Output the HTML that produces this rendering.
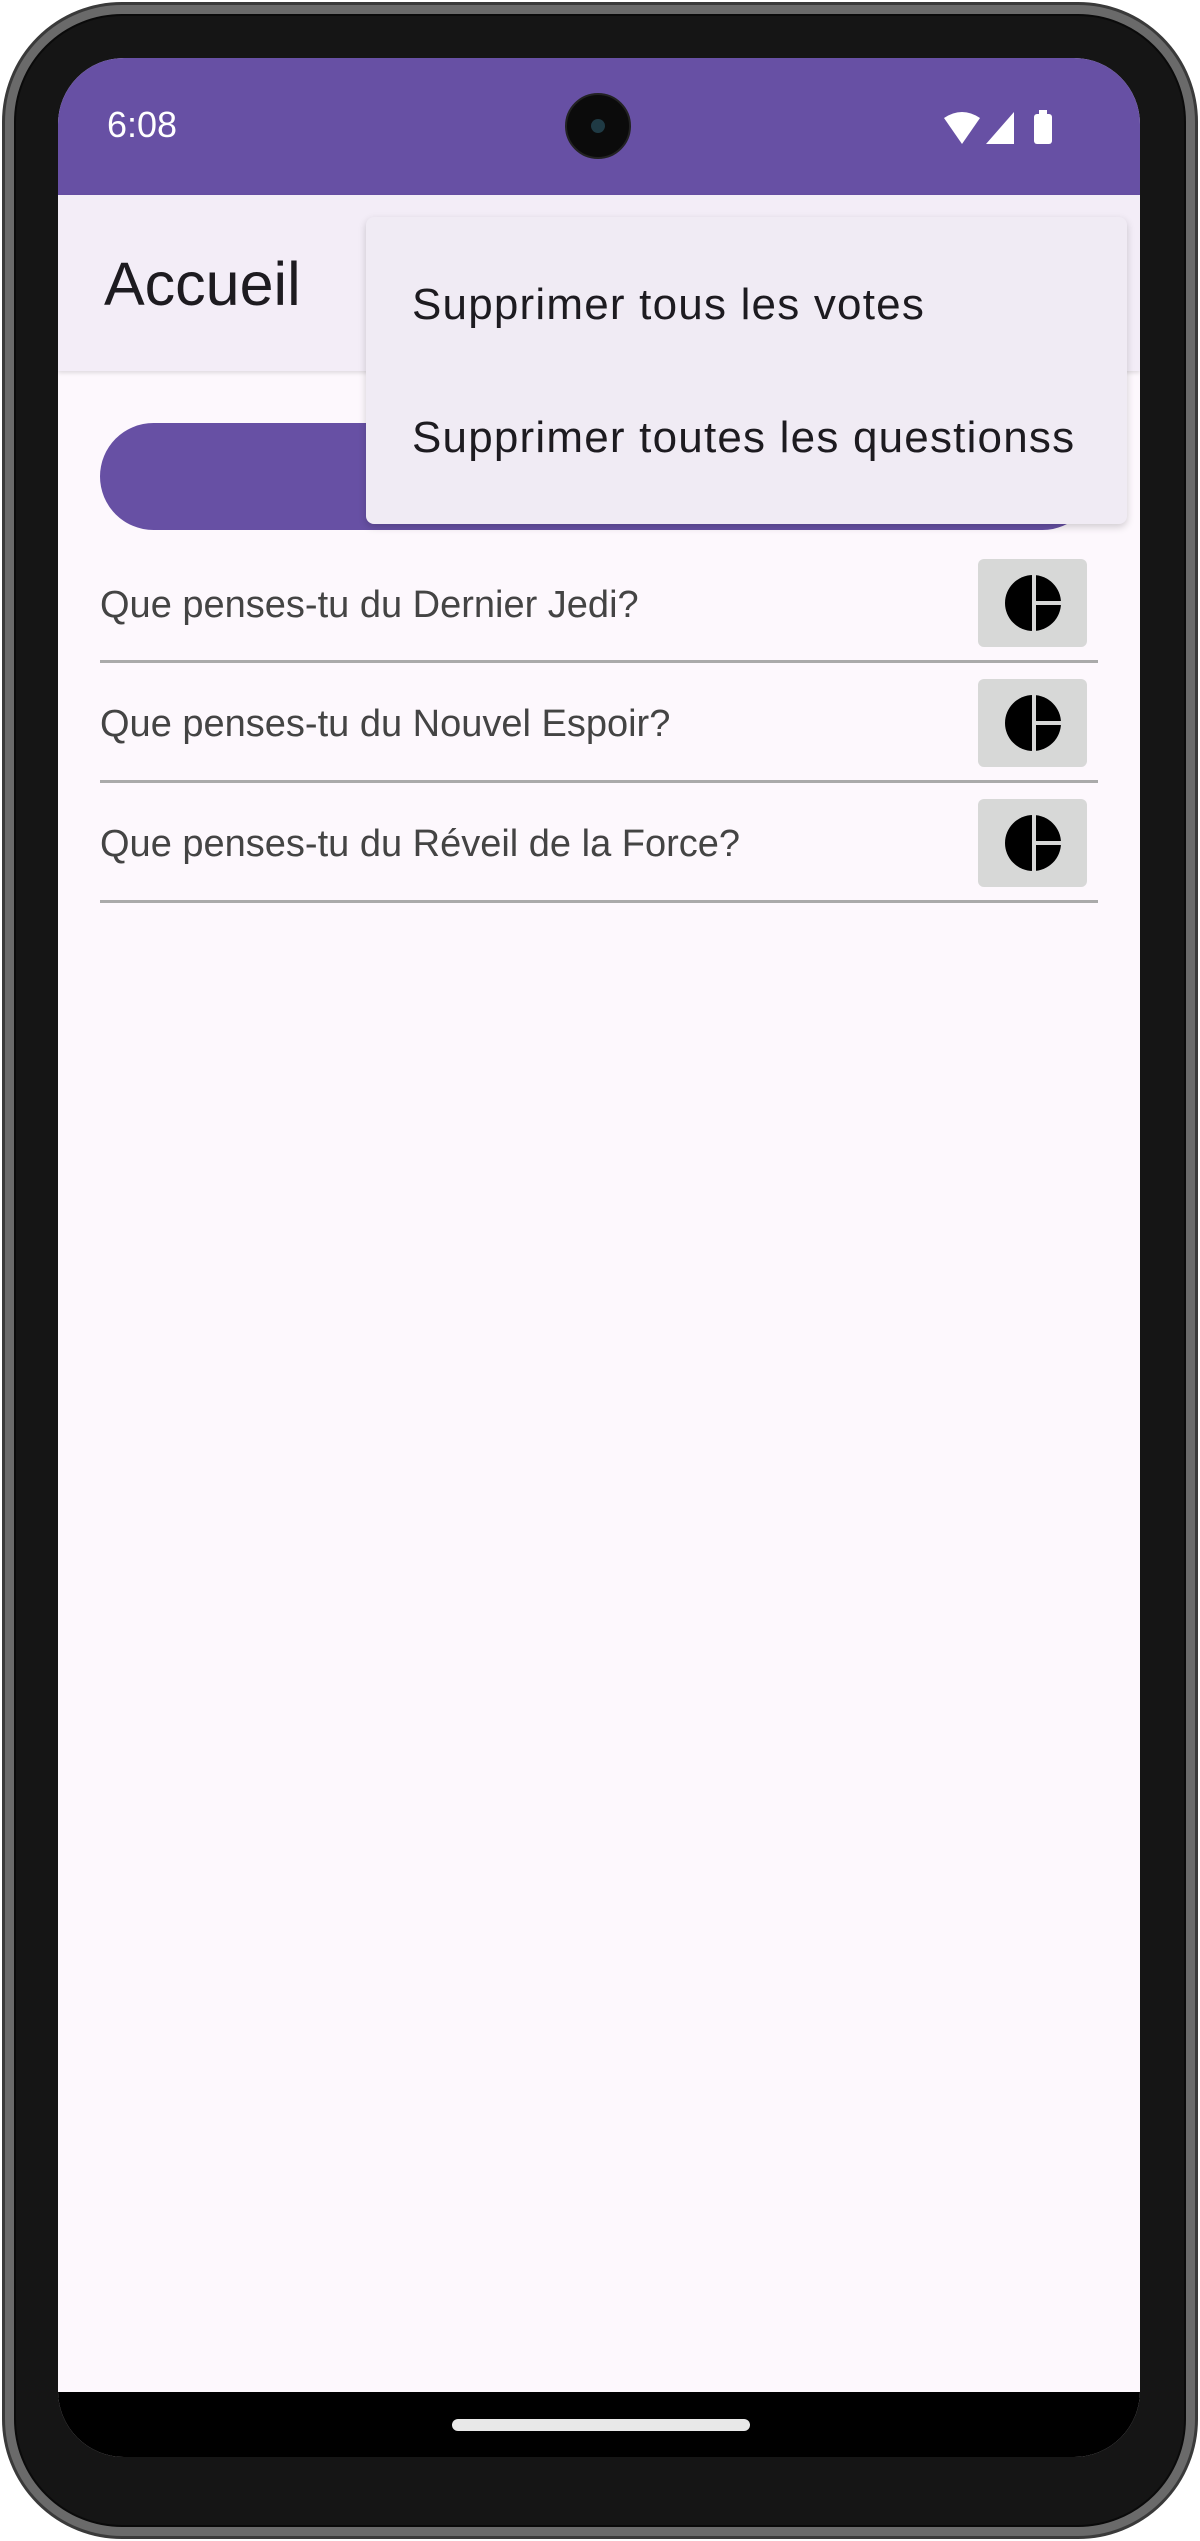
<!DOCTYPE html>
<html><head><meta charset="utf-8"><style>
*{margin:0;padding:0;box-sizing:border-box}
body{width:1200px;height:2541px;background:#fff;position:relative;overflow:hidden;font-family:"Liberation Sans",sans-serif}
.abs{position:absolute}
.phone{left:2px;top:2px;width:1196px;height:2537px;border-radius:120px;background:#6a6a6a;border:3px solid #3a3a3a}
.bezel{left:14px;top:14px;width:1172px;height:2513px;border-radius:108px;background:#151515;border:2px solid #0a0a0a}
.screen{left:58px;top:58px;width:1082px;height:2399px;border-radius:66px;overflow:hidden;background:#FDF8FD}
</style></head><body>
<div class="abs phone"></div>
<div class="abs bezel"></div>
<div class="abs screen">
  <div class="abs" style="left:0;top:0;width:1082px;height:137px;background:#6750A4"></div>
  <div class="abs" style="left:49px;top:46px;color:#fff;font-size:36px">6:08</div>
  <div class="abs" style="left:507px;top:35px;width:66px;height:66px;border-radius:50%;background:#0b0b0b;border:2px solid #222"><div class="abs" style="left:24px;top:24px;width:14px;height:14px;border-radius:50%;background:#1f3a44"></div></div>
  <svg class="abs" style="left:884px;top:50px" width="124" height="40" viewBox="0 0 124 40">
    <path d="M2 10 Q20 -2 38 10 L20 36 Z" fill="#fff"/>
    <path d="M44 36 L72 4 L72 36 Z" fill="#fff"/>
    <rect x="92" y="6" width="18" height="30" rx="3" fill="#fff"/><rect x="97" y="2" width="8" height="5" fill="#fff"/>
  </svg>
  <div class="abs" style="left:0;top:137px;width:1082px;height:176px;background:#F3EDF7;box-shadow:0 2px 4px rgba(0,0,0,.12)"></div>
  <div class="abs" style="left:46px;top:191px;font-size:61px;color:#1D1B20;line-height:70px">Accueil</div>
  <div class="abs" style="left:42px;top:365px;width:996px;height:107px;border-radius:54px;background:#6750A4"></div>
  <div class="abs" style="left:308px;top:159px;width:761px;height:307px;background:#F0EBF4;border-radius:8px;box-shadow:0 3px 8px rgba(0,0,0,.18)"></div>
  <div class="abs" style="left:354px;top:222px;font-size:44px;color:#1D1B20;letter-spacing:1.2px;line-height:50px">Supprimer tous les votes</div>
  <div class="abs" style="left:354px;top:355px;font-size:44px;color:#1D1B20;letter-spacing:1.2px;line-height:50px">Supprimer toutes les questionss</div>

  <div class="abs" style="left:42px;top:522px;font-size:38px;color:#444;line-height:50px">Que penses-tu du Dernier Jedi?</div>
  <div class="abs" style="left:42px;top:602px;width:998px;height:3px;background:#aaa"></div>
  <div class="abs" style="left:42px;top:641px;font-size:38px;color:#444;line-height:50px">Que penses-tu du Nouvel Espoir?</div>
  <div class="abs" style="left:42px;top:722px;width:998px;height:3px;background:#aaa"></div>
  <div class="abs" style="left:42px;top:761px;font-size:38px;color:#444;line-height:50px">Que penses-tu du Réveil de la Force?</div>
  <div class="abs" style="left:42px;top:842px;width:998px;height:3px;background:#aaa"></div>

  <svg class="abs" style="left:920px;top:501px" width="109" height="88" viewBox="0 0 109 88"><rect width="109" height="88" rx="6" fill="#D7D8D7"/><circle cx="55" cy="44" r="28" fill="#000"/><rect x="54" y="14" width="4" height="60" fill="#D7D8D7"/><rect x="56" y="42" width="30" height="4" fill="#D7D8D7"/></svg>
  <svg class="abs" style="left:920px;top:621px" width="109" height="88" viewBox="0 0 109 88"><rect width="109" height="88" rx="6" fill="#D7D8D7"/><circle cx="55" cy="44" r="28" fill="#000"/><rect x="54" y="14" width="4" height="60" fill="#D7D8D7"/><rect x="56" y="42" width="30" height="4" fill="#D7D8D7"/></svg>
  <svg class="abs" style="left:920px;top:741px" width="109" height="88" viewBox="0 0 109 88"><rect width="109" height="88" rx="6" fill="#D7D8D7"/><circle cx="55" cy="44" r="28" fill="#000"/><rect x="54" y="14" width="4" height="60" fill="#D7D8D7"/><rect x="56" y="42" width="30" height="4" fill="#D7D8D7"/></svg>

  <div class="abs" style="left:0;top:2334px;width:1082px;height:65px;background:#000"></div>
  <div class="abs" style="left:394px;top:2361px;width:298px;height:12px;border-radius:6px;background:#e8e8e8"></div>
</div>
</body></html>
